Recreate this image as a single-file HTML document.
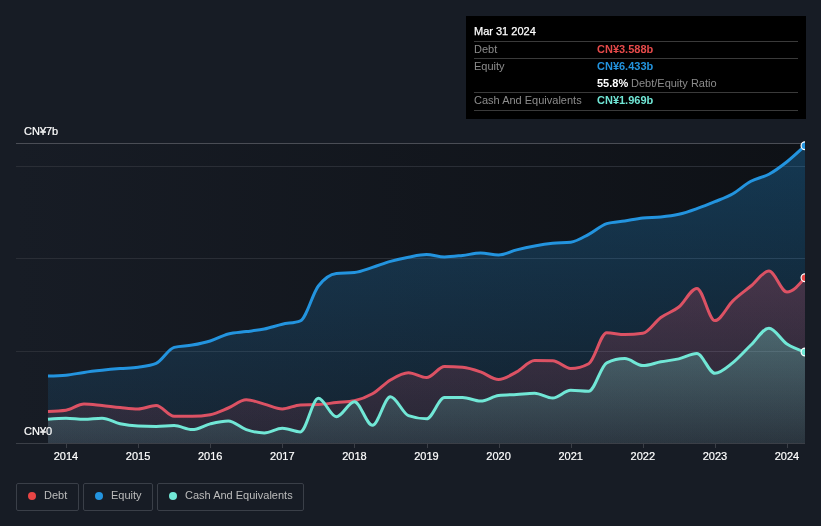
<!DOCTYPE html>
<html><head><meta charset="utf-8">
<style>
html,body{margin:0;padding:0;}
body{width:821px;height:526px;background:#171c25;overflow:hidden;position:relative;font-family:"Liberation Sans",sans-serif;}
svg{position:absolute;left:0;top:0;will-change:transform;}
.tip{will-change:transform;position:absolute;left:466px;top:16px;width:340px;height:103px;background:#000;}
.tip .hd{position:absolute;left:8px;top:9px;font-size:11px;color:#fff;-webkit-text-stroke:0.25px #fff;}
.tip .sep{position:absolute;left:8px;width:324px;height:1px;background:#3a3a3a;}
.tip .row{position:absolute;left:8px;width:324px;height:17px;font-size:11px;line-height:17px;}
.tip .l{position:absolute;left:0;color:#8c8c8c;}
.tip .v{position:absolute;left:123px;font-weight:bold;}
.legend{will-change:transform;position:absolute;top:483px;height:28px;box-sizing:border-box;border:1px solid #3a3f48;border-radius:2px;font-size:11px;color:#bcbcbc;line-height:23px;}
.legend .dot{position:absolute;left:11px;top:8px;width:8px;height:8px;border-radius:50%;}
.legend span.t{position:absolute;left:27px;top:0;white-space:nowrap;}
</style></head><body>
<svg width="821" height="526" viewBox="0 0 821 526">
<defs>
<linearGradient id="bgg" x1="0" y1="0" x2="1" y2="0">
<stop offset="0" stop-color="#171c25"/><stop offset="1" stop-color="#0e1116"/>
</linearGradient>
<linearGradient id="geq" x1="0" y1="0" x2="0" y2="1"><stop offset="0" stop-color="#2394df" stop-opacity="0.30"/><stop offset="1" stop-color="#2394df" stop-opacity="0.09"/></linearGradient>
<linearGradient id="gdb" x1="0" y1="0" x2="0" y2="1"><stop offset="0" stop-color="#e04d64" stop-opacity="0.25"/><stop offset="1" stop-color="#e04d64" stop-opacity="0.09"/></linearGradient>
<linearGradient id="gca" x1="0" y1="0" x2="0" y2="1"><stop offset="0" stop-color="#71e7d6" stop-opacity="0.30"/><stop offset="1" stop-color="#71e7d6" stop-opacity="0.10"/></linearGradient>
<clipPath id="clip"><rect x="16" y="100" width="789" height="343.5"/></clipPath>
</defs>
<rect x="16" y="143" width="789" height="300" fill="url(#bgg)"/>
<g stroke="#2a2e36" stroke-width="1">
<line x1="16" y1="166.5" x2="805" y2="166.5"/>
<line x1="16" y1="258.5" x2="805" y2="258.5"/>
<line x1="16" y1="351.5" x2="805" y2="351.5"/>
</g>
<line x1="16" y1="143.5" x2="805" y2="143.5" stroke="#4a4d55" stroke-width="1"/>
<g clip-path="url(#clip)">
<path d="M48.00,376.00C54.01,375.87 60.02,375.73 66.02,375.20C72.03,374.67 78.04,373.22 84.05,372.40C90.06,371.58 96.06,370.93 102.07,370.30C108.08,369.67 114.09,369.12 120.10,368.60C126.10,368.08 132.11,368.07 138.12,367.20C144.13,366.33 150.13,365.93 156.14,363.40C162.15,360.87 168.16,348.93 174.17,347.40C180.17,345.87 186.18,346.17 192.19,345.10C198.20,344.03 204.21,342.85 210.21,341.00C216.22,339.15 222.23,335.57 228.24,334.00C234.25,332.43 240.25,332.43 246.26,331.60C252.27,330.77 258.28,330.23 264.29,329.00C270.29,327.77 276.30,325.57 282.31,324.20C288.32,322.83 294.33,323.07 300.33,320.80C306.34,318.53 312.35,293.90 318.36,286.00C324.37,278.10 330.37,274.00 336.38,273.40C342.39,272.80 348.40,273.10 354.40,272.50C360.41,271.90 366.42,269.25 372.43,267.40C378.44,265.55 384.44,263.10 390.45,261.40C396.46,259.70 402.47,258.35 408.48,257.20C414.48,256.05 420.49,254.50 426.50,254.50C432.51,254.50 438.52,256.90 444.52,256.90C450.53,256.90 456.54,256.03 462.55,255.40C468.56,254.77 474.56,253.10 480.57,253.10C486.58,253.10 492.59,255.00 498.60,255.00C504.60,255.00 510.61,251.40 516.62,249.90C522.63,248.40 528.63,247.10 534.64,246.00C540.65,244.90 546.66,243.93 552.67,243.30C558.67,242.67 564.68,242.93 570.69,242.20C576.70,241.47 582.71,237.40 588.71,234.30C594.72,231.20 600.73,225.40 606.74,223.60C612.75,221.80 618.75,221.83 624.76,220.90C630.77,219.97 636.78,218.65 642.79,218.00C648.79,217.35 654.80,217.62 660.81,217.00C666.82,216.38 672.83,215.68 678.83,214.30C684.84,212.92 690.85,210.80 696.86,208.70C702.87,206.60 708.87,204.20 714.88,201.70C720.89,199.20 726.90,197.10 732.90,193.70C738.91,190.30 744.92,184.55 750.93,181.30C756.94,178.05 762.94,177.47 768.95,174.20C774.96,170.93 780.97,166.45 786.98,161.70C792.98,156.95 798.99,151.32 805.00,145.70L805.00,443 L48.00,443 Z" fill="url(#geq)"/>
<path d="M48.00,411.40C54.01,411.20 60.02,411.00 66.02,410.20C72.03,409.40 78.04,404.00 84.05,404.00C90.06,404.00 96.06,405.00 102.07,405.60C108.08,406.20 114.09,407.03 120.10,407.60C126.10,408.17 132.11,409.00 138.12,409.00C144.13,409.00 150.13,405.50 156.14,405.50C162.15,405.50 168.16,416.30 174.17,416.30C180.17,416.30 186.18,416.30 192.19,416.30C198.20,416.30 204.21,415.77 210.21,414.70C216.22,413.63 222.23,410.50 228.24,408.00C234.25,405.50 240.25,399.70 246.26,399.70C252.27,399.70 258.28,402.55 264.29,404.10C270.29,405.65 276.30,409.00 282.31,409.00C288.32,409.00 294.33,405.10 300.33,404.90C306.34,404.70 312.35,404.80 318.36,404.60C324.37,404.40 330.37,403.15 336.38,402.50C342.39,401.85 348.40,401.90 354.40,400.70C360.41,399.50 366.42,397.25 372.43,393.80C378.44,390.35 384.44,383.50 390.45,380.00C396.46,376.50 402.47,372.80 408.48,372.80C414.48,372.80 420.49,377.60 426.50,377.60C432.51,377.60 438.52,366.50 444.52,366.50C450.53,366.50 456.54,366.77 462.55,367.30C468.56,367.83 474.56,369.87 480.57,371.90C486.58,373.93 492.59,379.50 498.60,379.50C504.60,379.50 510.61,375.07 516.62,371.90C522.63,368.73 528.63,360.50 534.64,360.50C540.65,360.50 546.66,360.57 552.67,360.70C558.67,360.83 564.68,368.50 570.69,368.50C576.70,368.50 582.71,366.90 588.71,363.70C594.72,360.50 600.73,332.70 606.74,332.70C612.75,332.70 618.75,334.60 624.76,334.60C630.77,334.60 636.78,334.17 642.79,333.30C648.79,332.43 654.80,321.88 660.81,317.50C666.82,313.12 672.83,311.85 678.83,307.00C684.84,302.15 690.85,288.40 696.86,288.40C702.87,288.40 708.87,320.60 714.88,320.60C720.89,320.60 726.90,306.57 732.90,300.80C738.91,295.03 744.92,290.95 750.93,286.00C756.94,281.05 762.94,271.10 768.95,271.10C774.96,271.10 780.97,292.00 786.98,292.00C792.98,292.00 798.99,284.90 805.00,277.80L805.00,443 L48.00,443 Z" fill="url(#gdb)"/>
<path d="M48.00,419.30C54.01,418.75 60.02,418.20 66.02,418.20C72.03,418.20 78.04,419.30 84.05,419.30C90.06,419.30 96.06,418.20 102.07,418.20C108.08,418.20 114.09,422.48 120.10,423.80C126.10,425.12 132.11,425.90 138.12,426.10C144.13,426.30 150.13,426.40 156.14,426.40C162.15,426.40 168.16,425.50 174.17,425.50C180.17,425.50 186.18,429.60 192.19,429.60C198.20,429.60 204.21,425.33 210.21,423.90C216.22,422.47 222.23,421.00 228.24,421.00C234.25,421.00 240.25,427.72 246.26,429.70C252.27,431.68 258.28,432.90 264.29,432.90C270.29,432.90 276.30,428.20 282.31,428.20C288.32,428.20 294.33,431.90 300.33,431.90C306.34,431.90 312.35,398.30 318.36,398.30C324.37,398.30 330.37,416.80 336.38,416.80C342.39,416.80 348.40,401.80 354.40,401.80C360.41,401.80 366.42,425.30 372.43,425.30C378.44,425.30 384.44,396.70 390.45,396.70C396.46,396.70 402.47,413.47 408.48,415.60C414.48,417.73 420.49,418.80 426.50,418.80C432.51,418.80 438.52,397.67 444.52,397.60C450.53,397.53 456.54,397.50 462.55,397.50C468.56,397.50 474.56,401.10 480.57,401.10C486.58,401.10 492.59,396.23 498.60,395.50C504.60,394.77 510.61,394.78 516.62,394.40C522.63,394.02 528.63,393.20 534.64,393.20C540.65,393.20 546.66,398.00 552.67,398.00C558.67,398.00 564.68,390.30 570.69,390.30C576.70,390.30 582.71,391.30 588.71,391.30C594.72,391.30 600.73,365.60 606.74,362.80C612.75,360.00 618.75,358.60 624.76,358.60C630.77,358.60 636.78,365.60 642.79,365.60C648.79,365.60 654.80,362.92 660.81,361.80C666.82,360.68 672.83,360.28 678.83,358.90C684.84,357.52 690.85,353.50 696.86,353.50C702.87,353.50 708.87,373.30 714.88,373.30C720.89,373.30 726.90,367.32 732.90,362.60C738.91,357.88 744.92,350.72 750.93,345.00C756.94,339.28 762.94,328.30 768.95,328.30C774.96,328.30 780.97,340.15 786.98,344.10C792.98,348.05 798.99,350.02 805.00,352.00L805.00,443 L48.00,443 Z" fill="url(#gca)"/>
<path d="M48.00,376.00C54.01,375.87 60.02,375.73 66.02,375.20C72.03,374.67 78.04,373.22 84.05,372.40C90.06,371.58 96.06,370.93 102.07,370.30C108.08,369.67 114.09,369.12 120.10,368.60C126.10,368.08 132.11,368.07 138.12,367.20C144.13,366.33 150.13,365.93 156.14,363.40C162.15,360.87 168.16,348.93 174.17,347.40C180.17,345.87 186.18,346.17 192.19,345.10C198.20,344.03 204.21,342.85 210.21,341.00C216.22,339.15 222.23,335.57 228.24,334.00C234.25,332.43 240.25,332.43 246.26,331.60C252.27,330.77 258.28,330.23 264.29,329.00C270.29,327.77 276.30,325.57 282.31,324.20C288.32,322.83 294.33,323.07 300.33,320.80C306.34,318.53 312.35,293.90 318.36,286.00C324.37,278.10 330.37,274.00 336.38,273.40C342.39,272.80 348.40,273.10 354.40,272.50C360.41,271.90 366.42,269.25 372.43,267.40C378.44,265.55 384.44,263.10 390.45,261.40C396.46,259.70 402.47,258.35 408.48,257.20C414.48,256.05 420.49,254.50 426.50,254.50C432.51,254.50 438.52,256.90 444.52,256.90C450.53,256.90 456.54,256.03 462.55,255.40C468.56,254.77 474.56,253.10 480.57,253.10C486.58,253.10 492.59,255.00 498.60,255.00C504.60,255.00 510.61,251.40 516.62,249.90C522.63,248.40 528.63,247.10 534.64,246.00C540.65,244.90 546.66,243.93 552.67,243.30C558.67,242.67 564.68,242.93 570.69,242.20C576.70,241.47 582.71,237.40 588.71,234.30C594.72,231.20 600.73,225.40 606.74,223.60C612.75,221.80 618.75,221.83 624.76,220.90C630.77,219.97 636.78,218.65 642.79,218.00C648.79,217.35 654.80,217.62 660.81,217.00C666.82,216.38 672.83,215.68 678.83,214.30C684.84,212.92 690.85,210.80 696.86,208.70C702.87,206.60 708.87,204.20 714.88,201.70C720.89,199.20 726.90,197.10 732.90,193.70C738.91,190.30 744.92,184.55 750.93,181.30C756.94,178.05 762.94,177.47 768.95,174.20C774.96,170.93 780.97,166.45 786.98,161.70C792.98,156.95 798.99,151.32 805.00,145.70" fill="none" stroke="#2394df" stroke-width="3"/>
<path d="M48.00,411.40C54.01,411.20 60.02,411.00 66.02,410.20C72.03,409.40 78.04,404.00 84.05,404.00C90.06,404.00 96.06,405.00 102.07,405.60C108.08,406.20 114.09,407.03 120.10,407.60C126.10,408.17 132.11,409.00 138.12,409.00C144.13,409.00 150.13,405.50 156.14,405.50C162.15,405.50 168.16,416.30 174.17,416.30C180.17,416.30 186.18,416.30 192.19,416.30C198.20,416.30 204.21,415.77 210.21,414.70C216.22,413.63 222.23,410.50 228.24,408.00C234.25,405.50 240.25,399.70 246.26,399.70C252.27,399.70 258.28,402.55 264.29,404.10C270.29,405.65 276.30,409.00 282.31,409.00C288.32,409.00 294.33,405.10 300.33,404.90C306.34,404.70 312.35,404.80 318.36,404.60C324.37,404.40 330.37,403.15 336.38,402.50C342.39,401.85 348.40,401.90 354.40,400.70C360.41,399.50 366.42,397.25 372.43,393.80C378.44,390.35 384.44,383.50 390.45,380.00C396.46,376.50 402.47,372.80 408.48,372.80C414.48,372.80 420.49,377.60 426.50,377.60C432.51,377.60 438.52,366.50 444.52,366.50C450.53,366.50 456.54,366.77 462.55,367.30C468.56,367.83 474.56,369.87 480.57,371.90C486.58,373.93 492.59,379.50 498.60,379.50C504.60,379.50 510.61,375.07 516.62,371.90C522.63,368.73 528.63,360.50 534.64,360.50C540.65,360.50 546.66,360.57 552.67,360.70C558.67,360.83 564.68,368.50 570.69,368.50C576.70,368.50 582.71,366.90 588.71,363.70C594.72,360.50 600.73,332.70 606.74,332.70C612.75,332.70 618.75,334.60 624.76,334.60C630.77,334.60 636.78,334.17 642.79,333.30C648.79,332.43 654.80,321.88 660.81,317.50C666.82,313.12 672.83,311.85 678.83,307.00C684.84,302.15 690.85,288.40 696.86,288.40C702.87,288.40 708.87,320.60 714.88,320.60C720.89,320.60 726.90,306.57 732.90,300.80C738.91,295.03 744.92,290.95 750.93,286.00C756.94,281.05 762.94,271.10 768.95,271.10C774.96,271.10 780.97,292.00 786.98,292.00C792.98,292.00 798.99,284.90 805.00,277.80" fill="none" stroke="#dc5264" stroke-width="3"/>
<path d="M48.00,419.30C54.01,418.75 60.02,418.20 66.02,418.20C72.03,418.20 78.04,419.30 84.05,419.30C90.06,419.30 96.06,418.20 102.07,418.20C108.08,418.20 114.09,422.48 120.10,423.80C126.10,425.12 132.11,425.90 138.12,426.10C144.13,426.30 150.13,426.40 156.14,426.40C162.15,426.40 168.16,425.50 174.17,425.50C180.17,425.50 186.18,429.60 192.19,429.60C198.20,429.60 204.21,425.33 210.21,423.90C216.22,422.47 222.23,421.00 228.24,421.00C234.25,421.00 240.25,427.72 246.26,429.70C252.27,431.68 258.28,432.90 264.29,432.90C270.29,432.90 276.30,428.20 282.31,428.20C288.32,428.20 294.33,431.90 300.33,431.90C306.34,431.90 312.35,398.30 318.36,398.30C324.37,398.30 330.37,416.80 336.38,416.80C342.39,416.80 348.40,401.80 354.40,401.80C360.41,401.80 366.42,425.30 372.43,425.30C378.44,425.30 384.44,396.70 390.45,396.70C396.46,396.70 402.47,413.47 408.48,415.60C414.48,417.73 420.49,418.80 426.50,418.80C432.51,418.80 438.52,397.67 444.52,397.60C450.53,397.53 456.54,397.50 462.55,397.50C468.56,397.50 474.56,401.10 480.57,401.10C486.58,401.10 492.59,396.23 498.60,395.50C504.60,394.77 510.61,394.78 516.62,394.40C522.63,394.02 528.63,393.20 534.64,393.20C540.65,393.20 546.66,398.00 552.67,398.00C558.67,398.00 564.68,390.30 570.69,390.30C576.70,390.30 582.71,391.30 588.71,391.30C594.72,391.30 600.73,365.60 606.74,362.80C612.75,360.00 618.75,358.60 624.76,358.60C630.77,358.60 636.78,365.60 642.79,365.60C648.79,365.60 654.80,362.92 660.81,361.80C666.82,360.68 672.83,360.28 678.83,358.90C684.84,357.52 690.85,353.50 696.86,353.50C702.87,353.50 708.87,373.30 714.88,373.30C720.89,373.30 726.90,367.32 732.90,362.60C738.91,357.88 744.92,350.72 750.93,345.00C756.94,339.28 762.94,328.30 768.95,328.30C774.96,328.30 780.97,340.15 786.98,344.10C792.98,348.05 798.99,350.02 805.00,352.00" fill="none" stroke="#71e7d6" stroke-width="3"/>
<circle cx="805" cy="145.7" r="3.9" fill="#2394df" stroke="#fff" stroke-width="1.2"/>
<circle cx="805" cy="277.8" r="3.9" fill="#e84545" stroke="#fff" stroke-width="1.2"/>
<circle cx="805" cy="352" r="3.9" fill="#71e7d6" stroke="#fff" stroke-width="1.2"/>
</g>
<line x1="16" y1="443.5" x2="805" y2="443.5" stroke="#3b3f47" stroke-width="1"/>
<line x1="66.5" y1="443" x2="66.5" y2="448" stroke="#3b3f47" stroke-width="1"/><line x1="138.5" y1="443" x2="138.5" y2="448" stroke="#3b3f47" stroke-width="1"/><line x1="210.5" y1="443" x2="210.5" y2="448" stroke="#3b3f47" stroke-width="1"/><line x1="282.5" y1="443" x2="282.5" y2="448" stroke="#3b3f47" stroke-width="1"/><line x1="354.5" y1="443" x2="354.5" y2="448" stroke="#3b3f47" stroke-width="1"/><line x1="427.5" y1="443" x2="427.5" y2="448" stroke="#3b3f47" stroke-width="1"/><line x1="499.5" y1="443" x2="499.5" y2="448" stroke="#3b3f47" stroke-width="1"/><line x1="571.5" y1="443" x2="571.5" y2="448" stroke="#3b3f47" stroke-width="1"/><line x1="643.5" y1="443" x2="643.5" y2="448" stroke="#3b3f47" stroke-width="1"/><line x1="715.5" y1="443" x2="715.5" y2="448" stroke="#3b3f47" stroke-width="1"/><line x1="787.5" y1="443" x2="787.5" y2="448" stroke="#3b3f47" stroke-width="1"/>
<g font-family="Liberation Sans" font-size="11" fill="#ffffff" stroke="#ffffff" stroke-width="0.2">
<text x="24" y="135">CN¥7b</text>
<text x="24" y="435">CN¥0</text>
<text x="66.0" y="460" text-anchor="middle">2014</text><text x="138.1" y="460" text-anchor="middle">2015</text><text x="210.2" y="460" text-anchor="middle">2016</text><text x="282.3" y="460" text-anchor="middle">2017</text><text x="354.4" y="460" text-anchor="middle">2018</text><text x="426.5" y="460" text-anchor="middle">2019</text><text x="498.6" y="460" text-anchor="middle">2020</text><text x="570.7" y="460" text-anchor="middle">2021</text><text x="642.8" y="460" text-anchor="middle">2022</text><text x="714.9" y="460" text-anchor="middle">2023</text><text x="787.0" y="460" text-anchor="middle">2024</text>
</g>
</svg>
<div class="tip">
<div class="hd">Mar 31 2024</div>
<div class="sep" style="top:25px"></div>
<div class="sep" style="top:42px"></div>
<div class="sep" style="top:76px"></div>
<div class="sep" style="top:94px"></div>
<div class="row" style="top:25px;"><span class="l">Debt</span><span class="v" style="color:#e64a4a">CN¥3.588b</span></div>
<div class="row" style="top:42px;"><span class="l">Equity</span><span class="v" style="color:#2394df">CN¥6.433b</span></div>
<div class="row" style="top:59px;"><span class="v" style="color:#fff">55.8%</span><span style="position:absolute;left:157px;color:#8c8c8c;">Debt/Equity Ratio</span></div>
<div class="row" style="top:76px;"><span class="l">Cash And Equivalents</span><span class="v" style="color:#71e7d6">CN¥1.969b</span></div>
</div>
<div class="legend" style="left:16px;width:63px;"><div class="dot" style="background:#e84545"></div><span class="t">Debt</span></div>
<div class="legend" style="left:83px;width:70px;"><div class="dot" style="background:#2394df"></div><span class="t">Equity</span></div>
<div class="legend" style="left:157px;width:147px;"><div class="dot" style="background:#71e7d6"></div><span class="t">Cash And Equivalents</span></div>
</body></html>
